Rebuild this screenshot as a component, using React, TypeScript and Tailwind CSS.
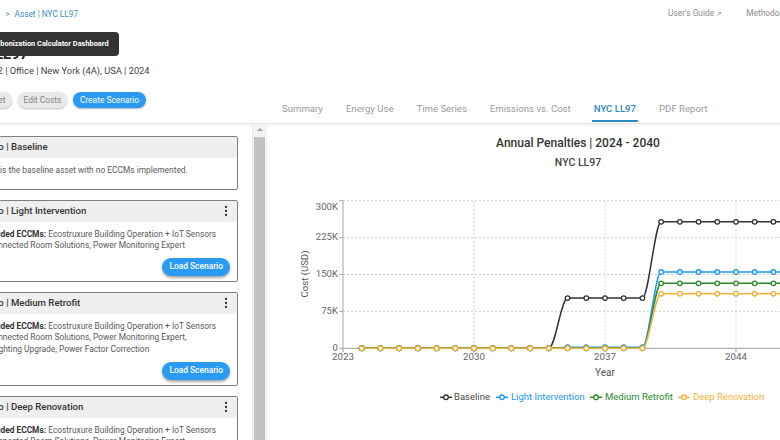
import React from "react";

type Series = {
  name: string;
  color: string;
  text: string;
  value: (year: number) => number;
  symbolX: number;
  textX: number;
};

const years = Array.from({ length: 28 }, (_, i) => 2024 + i);

const series: Series[] = [
  { name: "Baseline", color: "#333333", text: "#4a4a4a", value: (y) => (y < 2035 ? 0 : y < 2040 ? 102000 : 257000), symbolX: 173, textX: 187 },
  { name: "Light Intervention", color: "#2196f3", text: "#2196f3", value: (y) => (y < 2035 ? 0 : y < 2040 ? 2000 : 155000), symbolX: 229, textX: 244 },
  { name: "Medium Retrofit", color: "#2a8a2a", text: "#2a8a2a", value: (y) => (y < 2040 ? 0 : 132000), symbolX: 323, textX: 338 },
  { name: "Deep Renovation", color: "#f4b23a", text: "#f4b23a", value: (y) => (y < 2040 ? 0 : 111000), symbolX: 411, textX: 426 },
];

const X0 = 76;
const PX_YEAR = 18.714;
const Y0 = 224.3;
const PX_VAL = 36.9 / 75000;
const xs = (yr: number) => X0 + (yr - 2023) * PX_YEAR;
const ys = (v: number) => Y0 - v * PX_VAL;

function pathFor(vals: number[]) {
  let d = `M${xs(years[0])},${ys(vals[0])}`;
  for (let i = 1; i < years.length; i++) {
    const xa = xs(years[i - 1]);
    const xb = xs(years[i]);
    const ya = ys(vals[i - 1]);
    const yb = ys(vals[i]);
    if (ya === yb) {
      d += ` L${xb},${yb}`;
    } else {
      const dx = (xb - xa) / 3;
      d += ` C${xa + dx},${ya} ${xb - dx},${yb} ${xb},${yb}`;
    }
  }
  return d;
}

const yTicks = [
  { v: 0, label: "0", ly: 224.3 },
  { v: 75000, label: "75K", ly: 187.4 },
  { v: 150000, label: "150K", ly: 150.5 },
  { v: 225000, label: "225K", ly: 113.6 },
  { v: 300000, label: "300K", ly: 83 },
];

const xTicks = [2023, 2030, 2037, 2044, 2051];

function PenaltyChart() {
  const top = ys(300000);
  return (
    <svg width="693" height="316" className="block" fontFamily="Roboto, sans-serif">
      <text x="311" y="20" textAnchor="middle" dominantBaseline="middle" fontSize="12" fontWeight="500" fill="#333">
        Annual Penalties | 2024 - 2040
      </text>
      <text x="311" y="39" textAnchor="middle" dominantBaseline="middle" fontSize="10.5" fontWeight="500" fill="#444">
        NYC LL97
      </text>

      {yTicks.slice(1).map((t) => (
        <line key={t.v} x1={X0} x2="693" y1={ys(t.v)} y2={ys(t.v)} stroke="#d2d2d2" strokeDasharray="2 2" />
      ))}
      {xTicks.slice(1).map((yr) => (
        <line key={yr} x1={xs(yr)} x2={xs(yr)} y1={top} y2={Y0} stroke="#d2d2d2" strokeDasharray="2 2" />
      ))}

      <line x1={X0} x2={X0} y1={top} y2={Y0} stroke="#a8a8a8" />
      <line x1={X0} x2="693" y1={Y0} y2={Y0} stroke="#9a9a9a" />

      {yTicks.map((t) => (
        <g key={t.label}>
          <line x1={X0 - 4} x2={X0} y1={ys(t.v)} y2={ys(t.v)} stroke="#a8a8a8" />
          <text x={X0 - 5} y={t.ly} textAnchor="end" dominantBaseline="middle" fontSize="9.6" fill="#666">
            {t.label}
          </text>
        </g>
      ))}
      {xTicks.map((yr) => (
        <g key={yr}>
          <line x1={xs(yr)} x2={xs(yr)} y1={Y0} y2={Y0 + 4} stroke="#9a9a9a" />
          <text x={xs(yr)} y="233" textAnchor="middle" dominantBaseline="middle" fontSize="9.8" fill="#666">
            {yr}
          </text>
        </g>
      ))}

      <text x="338" y="249" textAnchor="middle" dominantBaseline="middle" fontSize="10" fill="#555">
        Year
      </text>
      <text x="38" y="150" textAnchor="middle" dominantBaseline="middle" fontSize="9.6" fill="#555" transform="rotate(-90 38 150)">
        Cost (USD)
      </text>

      {series.map((s) => {
        const vals = years.map(s.value);
        return (
          <g key={s.name}>
            <path d={pathFor(vals)} fill="none" stroke={s.color} strokeWidth="1.5" />
            {years.map((yr, i) => (
              <circle key={yr} cx={xs(yr)} cy={ys(vals[i])} r="2.3" fill="#fff" stroke={s.color} strokeWidth="1.3" />
            ))}
          </g>
        );
      })}

      {series.map((s) => (
        <g key={s.name}>
          <line x1={s.symbolX} x2={s.symbolX + 12} y1="273.3" y2="273.3" stroke={s.color} strokeWidth="1.5" />
          <circle cx={s.symbolX + 6} cy="273.3" r="2.3" fill="#fff" stroke={s.color} strokeWidth="1.3" />
          <text x={s.textX} y="273.5" dominantBaseline="middle" fontSize="9.5" fill={s.text}>
            {s.name}
          </text>
        </g>
      ))}
    </svg>
  );
}

function Kebab() {
  return (
    <svg width="4" height="12" viewBox="0 0 4 12">
      <circle cx="2" cy="2" r="1.15" fill="#333" />
      <circle cx="2" cy="6" r="1.15" fill="#333" />
      <circle cx="2" cy="10" r="1.15" fill="#333" />
    </svg>
  );
}

type Card = {
  title: string;
  menu: boolean;
  lines: React.ReactNode[];
  load: boolean;
};

const cards: Card[] = [
  {
    title: "Scenario | Baseline",
    menu: false,
    lines: ["This is the baseline asset with no ECCMs implemented."],
    load: false,
  },
  {
    title: "Scenario | Light Intervention",
    menu: true,
    lines: [
      <>
        <span className="font-bold text-[#333]">Included ECCMs:</span> Ecostruxure Building Operation + IoT Sensors
      </>,
      "Connected Room Solutions, Power Monitoring Expert",
    ],
    load: true,
  },
  {
    title: "Scenario | Medium Retrofit",
    menu: true,
    lines: [
      <>
        <span className="font-bold text-[#333]">Included ECCMs:</span> Ecostruxure Building Operation + IoT Sensors
      </>,
      "Connected Room Solutions, Power Monitoring Expert,",
      "Lighting Upgrade, Power Factor Correction",
    ],
    load: true,
  },
  {
    title: "Scenario | Deep Renovation",
    menu: true,
    lines: [
      <>
        <span className="font-bold text-[#333]">Included ECCMs:</span> Ecostruxure Building Operation + IoT Sensors
      </>,
      "Connected Room Solutions, Power Monitoring Expert,",
      "Lighting Upgrade, Power Factor Correction, HVAC Upgrade",
    ],
    load: true,
  },
];

const lineIndent = ["", "pl-[6px]", "pl-[10px]"];

function ScenarioCard({ card }: { card: Card }) {
  return (
    <div className="w-[280px] shrink-0 rounded-[2px] border border-[#7f7f7f] bg-white">
      <div className="flex h-[21px] items-center justify-between bg-[#efefef] pl-[7px] pr-[9px]">
        <span className="text-[9.6px] font-medium text-[#333]">{card.title}</span>
        {card.menu && <Kebab />}
      </div>
      <div className={`pl-[23px] pr-[7px] pt-[7px] ${card.load ? "pb-[5px]" : "pb-[12px]"}`}>
        {card.lines.map((line, i) => (
          <div key={i} className={`whitespace-nowrap text-[8.4px] leading-[11.6px] text-[#5a5a5a] ${lineIndent[i]}`}>
            {line}
          </div>
        ))}
        {card.load && (
          <div className="mt-[6px] flex justify-end">
            <button className="h-[18px] rounded-full bg-[#2b9af3] px-[7px] text-[8.4px] font-medium text-white shadow-[0_2px_3px_rgba(0,0,0,0.35)]">
              Load Scenario
            </button>
          </div>
        )}
      </div>
    </div>
  );
}

const tabs = ["Summary", "Energy Use", "Time Series", "Emissions vs. Cost", "NYC LL97", "PDF Report"];

export default function App() {
  return (
    <div className="relative h-[440px] w-[780px] overflow-hidden bg-white font-['Roboto',sans-serif]">
      <div className="-ml-[50px] flex w-[1010px] flex-col">
        {/* header */}
        <div className="flex h-[124px] border-b border-[#e4e4e4] shadow-[0_1px_3px_rgba(0,0,0,0.07)]">
          <div className="flex w-[317px] flex-col pl-[12px]">
            <div className="-ml-[3px] mt-[8px] flex h-[12px] items-center text-[8.3px] text-[#3a8dbf]">
              <span>Dashboard</span>
              <span className="ml-[6px] text-[#6a9dc0]">&gt;</span>
              <span className="ml-[5px]">Asset | NYC LL97</span>
            </div>
            <div className="mt-[25px] h-[18px] text-[15px] font-bold leading-[18px] text-[#222]">NYC LL97</div>
            <div className="mt-[1px] h-[13px] text-[9.3px] leading-[13px] text-[#444]">
              Building 2 | Office | New York (4A), USA | 2024
            </div>
            <div className="mt-[15px] flex gap-[6px]">
              <button className="h-[16px] rounded-full bg-[#e9e9e9] px-[6px] text-[8.4px] text-[#858585] shadow-[0_1px_2px_rgba(0,0,0,0.25)]">
                Edit Asset
              </button>
              <button className="h-[16px] rounded-full bg-[#e9e9e9] px-[6px] text-[8.4px] text-[#858585] shadow-[0_1px_2px_rgba(0,0,0,0.25)]">
                Edit Costs
              </button>
              <button className="h-[16px] rounded-full bg-[#2b9af3] px-[6.5px] text-[8.4px] text-white shadow-[0_1px_2px_rgba(0,0,0,0.3)]">
                Create Scenario
              </button>
            </div>
          </div>
          <div className="flex w-[693px] flex-col justify-between">
            <div className="mt-[7px] flex gap-[24px] pl-[401px] text-[8.4px] leading-[12px] text-[#8c8c8c]">
              <span>
                User's Guide <span className="text-[7px]">↗</span>
              </span>
              <span>
                Methodology <span className="text-[7px]">↗</span>
              </span>
            </div>
            <div className="mb-[1px] flex gap-[19px] pl-[13px]">
              {tabs.map((t) => (
                <div
                  key={t}
                  className={`border-b-2 px-[2px] pb-[5px] text-[9.6px] leading-[12px] ${
                    t === "NYC LL97" ? "border-[#2a8bbf] font-medium text-[#2a8bbf]" : "border-transparent text-[#9b9b9b]"
                  }`}
                >
                  {t}
                </div>
              ))}
            </div>
          </div>
        </div>

        {/* body */}
        <div className="flex h-[316px]">
          <div className="flex w-[317px]">
            <div className="flex w-[302px] flex-col gap-[10px] overflow-hidden pl-[8px] pt-[12px]">
              {cards.map((c) => (
                <ScenarioCard key={c.title} card={c} />
              ))}
            </div>
            <div className="flex w-[15px] flex-col items-center border-l border-[#e8e8e8] bg-[#f3f3f3]">
              <div className="mt-[4px] h-0 w-0 border-x-[3px] border-b-[3px] border-x-transparent border-b-[#a3a3a3]" />
              <div className="ml-[-2px] mt-[6px] w-[11px] flex-1 bg-[#c1c1c1]" />
            </div>
          </div>
          <div className="w-[693px]">
            <PenaltyChart />
          </div>
        </div>
      </div>

      {/* tooltip over the breadcrumb */}
      <div className="absolute left-[-29px] top-[32px] flex h-[24px] items-center rounded-[4px] bg-[#333] px-[10px] text-[7.4px] font-bold text-white">
        Decarbonization Calculator Dashboard
      </div>
    </div>
  );
}
